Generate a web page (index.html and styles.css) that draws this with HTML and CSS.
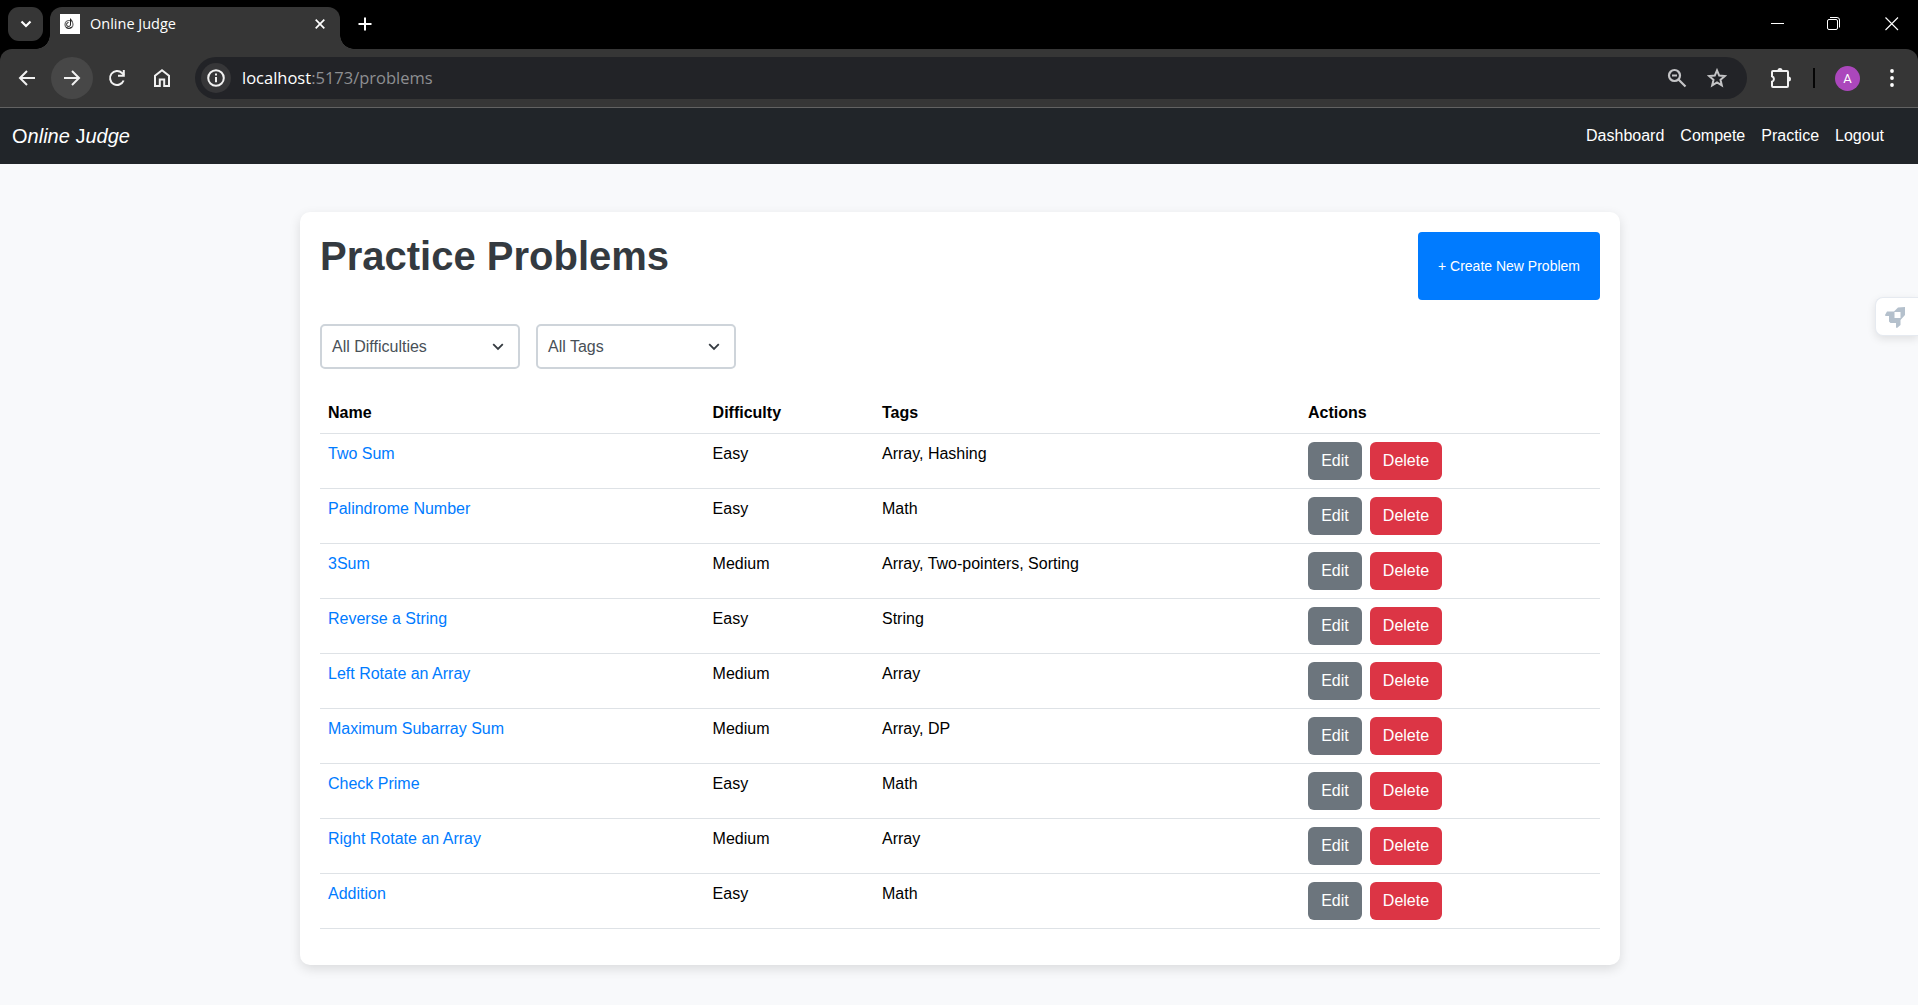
FILE: index.html
```html
<!DOCTYPE html>
<html lang="en">
<head>
<meta charset="utf-8">
<title>Online Judge</title>
<link rel="stylesheet" href="styles.css">
</head>
<body>
<div class="tabstrip">
  <div class="tab-search"><svg width="12" height="8" viewBox="0 0 12 8"><path d="M1.500 1.500L6 6l4.500-4.500" fill="none" stroke="#fff" stroke-width="2.200"/></svg></div>
  <div class="tab">
    <svg class="favicon" width="20" height="20" viewBox="0 0 20 20"><path fill="#fff" d="M0 0h20v20H0z"/><circle cx="9" cy="10.500" r="4" fill="none" stroke="#666" stroke-width="1.200"/><path d="M10.500 4.500V10a2 2 0 1 1-2-1.500M10.500 5l2 2.500M6 13.500q3 2 6-.5" fill="none" stroke="#222"/></svg>
    <span class="tab-title">Online Judge</span>
    <svg class="tab-close" width="10" height="10" viewBox="0 0 10 10"><path d="M.7.7l8.600 8.600M9.300.7L.7 9.300" stroke="#fff" stroke-width="1.700"/></svg>
  </div>
  <svg class="new-tab" width="14" height="14" viewBox="0 0 14 14"><path d="M7 .5v13M.5 7h13" stroke="#fff" stroke-width="2"/></svg>
  <div class="window-buttons">
    <svg width="14" height="14" viewBox="0 0 14 14"><path d="M0 6.500h13" stroke="#fff"/></svg>
    <svg class="restore" width="14" height="14" viewBox="0 0 14 14" fill="none" stroke="#fff"><rect x=".5" y="2.500" width="10" height="10" rx="1.500"/><path d="M3 .5h7a2.500 2.500 0 0 1 2.500 2.500v7.500"/></svg>
    <svg width="14" height="14" viewBox="0 0 14 14"><path d="M.5.5l12.500 12.500M13 .5L.5 13" stroke="#fff" stroke-width="1.100"/></svg>
  </div>
</div>
<div class="toolbar">
  <div class="tool"><svg width="24" height="24" viewBox="0 0 24 24"><path d="M20 12H5.500M12 5l-7 7 7 7" class="line"/></svg></div>
  <div class="tool tool-hover"><svg width="24" height="24" viewBox="0 0 24 24"><path d="M4 12h14.500M12 5l7 7-7 7" class="line"/></svg></div>
  <div class="tool"><svg width="24" height="24" viewBox="0 0 24 24"><path d="M18.600 14.500A7 7 0 1 1 17 7l2 2" class="line"/><path d="M18.800 4v5.800H13" class="line"/></svg></div>
  <div class="tool"><svg width="24" height="24" viewBox="0 0 24 24"><path d="M5 20V9.800L12 4.300l7 5.500V20h-4.800v-6.500H9.800V20z" class="line"/></svg></div>
  <div class="omnibox">
    <div class="info"><svg width="20" height="20" viewBox="0 0 20 20"><circle cx="10" cy="10" r="7.800" class="line"/><path d="M10 9v5.200M10 5.600v2" class="line"/></svg></div>
    <div class="url"><span class="host">localhost</span>:5173/problems</div>
    <svg class="zoom-icon" width="20" height="20" viewBox="0 0 20 20" fill="none" stroke="#c4c4c6" stroke-width="2.200"><circle cx="7.500" cy="7.500" r="5.500"/><path d="M11.500 11.500l7 7M5 7.500h5"/></svg>
    <svg class="star-icon" width="20" height="20" viewBox="0 0 20 20"><path d="M10 2.400l2.200 5.200 5.600.5-4.300 3.700 1.300 5.500-4.800-2.900-4.800 2.900 1.300-5.500-4.300-3.700 5.600-.5z" fill="none" stroke="#c4c4c6" stroke-width="2"/></svg>
  </div>
  <svg class="puzzle" width="22" height="22" viewBox="0 0 22 22"><path d="M3 4h14q1 0 1 1v14q0 1-1 1H3q-1 0-1-1v-4.200a3 3 0 0 0 0-5.600V5q0-1 1-1z" class="line"/><path d="M7.500 3.500a2.500 2.500 0 0 1 5 0zM18.500 9.500a2.500 2.500 0 0 1 0 5z" fill="#f1f1f1"/></svg>
  <div class="divider"></div>
  <div class="avatar">A</div>
  <svg class="menu" width="4" height="18" viewBox="0 0 4 18" fill="#fff"><circle cx="2" cy="2" r="1.900"/><circle cx="2" cy="9" r="1.900"/><circle cx="2" cy="16" r="1.900"/></svg>
</div>
<nav class="navbar">
  <a class="brand"><span>O</span><em>nline</em> <span>J</span><em>udge</em></a>
  <div class="nav-links"><a>Dashboard</a><a>Compete</a><a>Practice</a><a>Logout</a></div>
</nav>
<main class="page">
  <section class="card">
    <header class="card-header"><h1>Practice Problems</h1><button class="create">+ Create New Problem</button></header>
    <div class="filters">
      <div class="select">All Difficulties<svg width="12" height="8" viewBox="0 0 12 8"><path d="M1.200 1.200L6 6l4.800-4.800" class="caret"/></svg></div>
      <div class="select">All Tags<svg width="12" height="8" viewBox="0 0 12 8"><path d="M1.200 1.200L6 6l4.800-4.800" class="caret"/></svg></div>
    </div>
    <table class="problems">
      <colgroup><col class="c-name"><col class="c-diff"><col class="c-tags"><col></colgroup>
      <thead><tr><th>Name</th><th>Difficulty</th><th>Tags</th><th>Actions</th></tr></thead>
      <tbody>
        <tr><td><a>Two Sum</a></td><td>Easy</td><td>Array, Hashing</td><td><button class="btn edit">Edit</button><button class="btn delete">Delete</button></td></tr>
        <tr><td><a>Palindrome Number</a></td><td>Easy</td><td>Math</td><td><button class="btn edit">Edit</button><button class="btn delete">Delete</button></td></tr>
        <tr><td><a>3Sum</a></td><td>Medium</td><td>Array, Two-pointers, Sorting</td><td><button class="btn edit">Edit</button><button class="btn delete">Delete</button></td></tr>
        <tr><td><a>Reverse a String</a></td><td>Easy</td><td>String</td><td><button class="btn edit">Edit</button><button class="btn delete">Delete</button></td></tr>
        <tr><td><a>Left Rotate an Array</a></td><td>Medium</td><td>Array</td><td><button class="btn edit">Edit</button><button class="btn delete">Delete</button></td></tr>
        <tr><td><a>Maximum Subarray Sum</a></td><td>Medium</td><td>Array, DP</td><td><button class="btn edit">Edit</button><button class="btn delete">Delete</button></td></tr>
        <tr><td><a>Check Prime</a></td><td>Easy</td><td>Math</td><td><button class="btn edit">Edit</button><button class="btn delete">Delete</button></td></tr>
        <tr><td><a>Right Rotate an Array</a></td><td>Medium</td><td>Array</td><td><button class="btn edit">Edit</button><button class="btn delete">Delete</button></td></tr>
        <tr><td><a>Addition</a></td><td>Easy</td><td>Math</td><td><button class="btn edit">Edit</button><button class="btn delete">Delete</button></td></tr>
      </tbody>
    </table>
  </section>
</main>
<div class="rocket"><svg width="20" height="21" viewBox="0 0 20 21"><path fill="#b4c0cc" fill-rule="evenodd" d="M20 0v8l-4.500 5v5L12 21l-1-.5V16H5.500L4 14.500V9H.5L0 8l2-3.500h7L13 .5zM9.500 5v6h6V5z"/></svg></div>
</body>
</html>
```
FILE: styles.css
```css
* { box-sizing: border-box; }
body { margin: 0; height: 1005px; overflow: hidden; display: flex; flex-direction: column; background: #f8f9fb; font: 16px/24px "Liberation Sans", Arial, sans-serif; color: #000; }
svg { display: block; flex: none; }
button { font-family: inherit; border: 0; }
.line { fill: none; stroke: #f1f1f1; stroke-width: 2; }

.tabstrip { position: relative; z-index: 1; height: 49px; flex: none; display: flex; padding: 7px 19px 0 8px; background: #000; color: #fff; }
.tab-search { width: 35px; height: 34px; border-radius: 11px; background: #363636; display: flex; align-items: center; justify-content: center; }
.tab { position: relative; width: 290px; height: 42px; margin-left: 7px; padding: 0 15px 8px 10px; display: flex; align-items: center; border-radius: 12px 12px 0 0; background: #363636; }
.tab::before, .tab::after { content: ""; position: absolute; bottom: 0; width: 14px; height: 14px; }
.tab::before { left: -14px; background: radial-gradient(circle at 0 0, transparent 13.5px, #363636 14px); }
.tab::after { right: -14px; background: radial-gradient(circle at 100% 0, transparent 13.5px, #363636 14px); }
.tab-title { margin-left: 10px; flex: 1; font: 14.5px/20px "Open Sans", sans-serif; }
.new-tab { margin: 10px 0 0 18px; }
.window-buttons { display: flex; gap: 42px; margin: 10px 0 0 auto; }
.restore { margin-right: 2px; }

/* the upward shadow fills the area behind the rounded top corners */
.toolbar { height: 59px; flex: none; display: flex; align-items: center; padding: 0 24px 0 6px; background: #363636; border-bottom: 1px solid #626262; border-radius: 12px 12px 0 0; box-shadow: 0 -12px 0 0 #000; }
.tool { width: 42px; height: 42px; margin-right: 3px; display: flex; align-items: center; justify-content: center; border-radius: 50%; }
.tool-hover { background: #474747; }
.omnibox { width: 1552px; height: 42px; margin-left: 9px; padding: 0 20px 0 6px; border-radius: 21px; background: #222327; display: flex; align-items: center; }
.info { width: 30px; height: 30px; border-radius: 50%; background: #363638; display: flex; align-items: center; justify-content: center; }
.url { margin-left: 11px; flex: 1; font: 16.5px/24px "Open Sans", sans-serif; color: #8e8f92; }
.host { color: #fff; }
.star-icon { margin-left: 20px; }
.puzzle { margin-left: 23px; }
.divider { width: 2px; height: 20px; margin-left: 21px; background: #050505; }
.avatar { width: 25px; height: 25px; margin-left: 20px; border-radius: 50%; background: #ab47bc; color: #fff; font: 13px/25px Roboto, sans-serif; text-align: center; }
.menu { margin-left: 30px; }

.navbar { height: 56px; flex: none; padding: 0 34px 0 12px; display: flex; align-items: center; justify-content: space-between; background: #212529; color: #fff; }
.brand { font-size: 20px; }
.nav-links { display: flex; gap: 16px; }

.page { padding: 48px 0 0 300px; }
.card { width: 1320px; height: 753px; padding: 20px; border-radius: 10px; background: #fff; box-shadow: 0 4px 12px rgba(0,0,0,.12); }
.card-header { display: flex; justify-content: space-between; height: 92px; }
h1 { margin: 0; font-size: 40px; line-height: 48px; color: #343a40; }
.create { width: 182px; height: 68px; border-radius: 4px; background: #007bff; color: #fff; font-size: 14px; }
.filters { display: flex; gap: 16px; margin-bottom: 24px; }
.select { width: 200px; height: 45px; padding: 0 14px 0 10px; display: flex; align-items: center; justify-content: space-between; border: 2px solid #ced4da; border-radius: 5px; color: #495057; }
.caret { fill: none; stroke: #343a40; stroke-width: 1.8; }
.problems { width: 1280px; table-layout: fixed; border-collapse: separate; border-spacing: 0; }
.c-name { width: 384.6px; }
.c-diff { width: 169.4px; }
.c-tags { width: 426px; }
.problems th, .problems td { padding: 8px; text-align: left; vertical-align: top; border-bottom: 1px solid #dee2e6; }
.problems a { color: #007bff; }
.btn { height: 38px; padding: 0; border-radius: 6px; color: #fff; font-size: 16px; vertical-align: top; }
.edit { width: 54px; margin-right: 8px; background: #6c757d; }
.delete { width: 72px; background: #dc3545; }

.rocket { position: absolute; right: 0; top: 297px; width: 43px; height: 39px; padding: 9px; border: 1px solid #e6eaf0; border-right: 0; border-radius: 8px 0 0 8px; background: #fff; box-shadow: 0 3px 8px rgba(0,0,0,.1); }
```
